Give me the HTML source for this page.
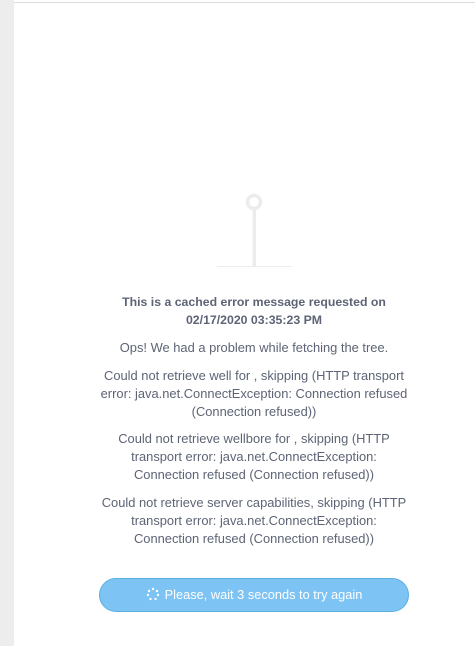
<!DOCTYPE html>
<html><head><style>
body{margin:0;width:475px;height:646px;background:#fff;position:relative;overflow:hidden;font-family:"Liberation Sans",sans-serif;}
.side{position:absolute;left:0;top:0;width:14px;height:646px;background:#ededed;}
.topl{position:absolute;left:14px;top:2px;width:461px;height:1px;background:#dcdcdc;}
.c{position:absolute;left:44px;width:420px;text-align:center;color:#5d6475;font-size:12.9px;line-height:18px;}
.b{font-weight:bold;font-size:12.3px;}
.btn{position:absolute;left:99px;top:578px;width:308px;height:32px;border:1px solid #5bb0e0;border-radius:17px;background:#7dc3f3;color:#fff;font-size:12.8px;line-height:32px;text-align:center;}
</style></head><body>
<div class="side"></div><div class="topl"></div>
<svg style="position:absolute;left:210px;top:190px" width="90" height="80">
<circle cx="44" cy="12" r="6.5" fill="none" stroke="#ececec" stroke-width="3.5"/>
<rect x="42.5" y="18" width="3.5" height="58" fill="#ececec"/>
<rect x="7" y="76" width="75" height="1" fill="#ececec"/>
</svg>
<div class="c b" style="top:293px">This is a cached error message requested on<br>02/17/2020 03:35:23 PM</div>
<div class="c" style="top:339px">Ops! We had a problem while fetching the tree.</div>
<div class="c" style="top:367px">Could not retrieve well for , skipping (HTTP transport<br>error: java.net.ConnectException: Connection refused<br>(Connection refused))</div>
<div class="c" style="top:430px">Could not retrieve wellbore for , skipping (HTTP<br>transport error: java.net.ConnectException:<br>Connection refused (Connection refused))</div>
<div class="c" style="top:494px">Could not retrieve server capabilities, skipping (HTTP<br>transport error: java.net.ConnectException:<br>Connection refused (Connection refused))</div>
<div class="btn"><svg width="14" height="14" style="vertical-align:-2px;margin-right:5px"><g fill="#fff"><circle cx="7" cy="2" r="1.2"/><circle cx="11" cy="4" r="1.2"/><circle cx="12" cy="8" r="1.2"/><circle cx="9.5" cy="12" r="1.2"/><circle cx="4.5" cy="12" r="1.2"/><circle cx="2" cy="8" r="1.2"/><circle cx="3" cy="4" r="1.2"/></g></svg>Please, wait 3 seconds to try again</div>
</body></html>
